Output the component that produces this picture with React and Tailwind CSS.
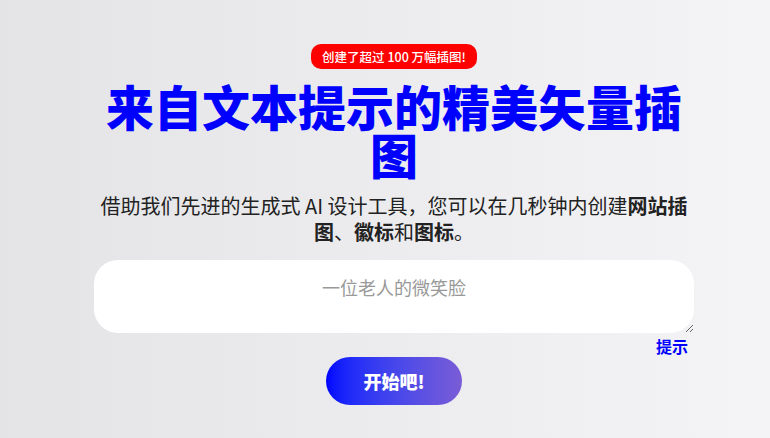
export default function App() {
  return (
    <div
      className="min-h-[438px] w-full bg-gradient-to-r from-[#e4e4e7] to-[#f4f4f6] flex flex-col items-center pt-[44px] pl-[18px]"
      style={{ fontFamily: '"Noto Sans CJK SC", "Noto Sans", sans-serif' }}
    >
      <div className="w-[600px] flex flex-col items-center">
        <span className="bg-[#ff0000] text-white text-[12.5px] font-medium leading-[25px] h-[25px] px-[11px] rounded-[10px]">
          创建了超过 100 万幅插图!
        </span>
        <h1 className="mt-[12px] text-center text-[48px] leading-[48px] font-black text-[#0000ff]">
          来自文本提示的精美矢量插图
        </h1>
        <p className="mt-[16px] text-center text-[20px] leading-[26px] text-[#222]">
          借助我们先进的生成式 AI 设计工具，您可以在几秒钟内创建<b>网站插图</b>、<b>徽标</b>和<b>图标</b>。
        </p>
        <div className="mt-[15px] w-full flex flex-col items-end">
          <textarea
            className="w-full h-[73px] bg-white rounded-[24px] pt-[14px] px-4 text-center text-[18px] text-[#333] placeholder:text-[#999] outline-none"
            placeholder="一位老人的微笑脸"
          />
          <span className="mr-[6px] text-[16px] leading-[22px] font-bold text-[#0000ff] mt-[2px]">提示</span>
        </div>
        <button className="w-[136px] h-[48px] rounded-full bg-gradient-to-r from-[#0000ff] to-[#7a5cd6] text-white font-black text-[18px]">
          开始吧!
        </button>
      </div>
    </div>
  );
}
